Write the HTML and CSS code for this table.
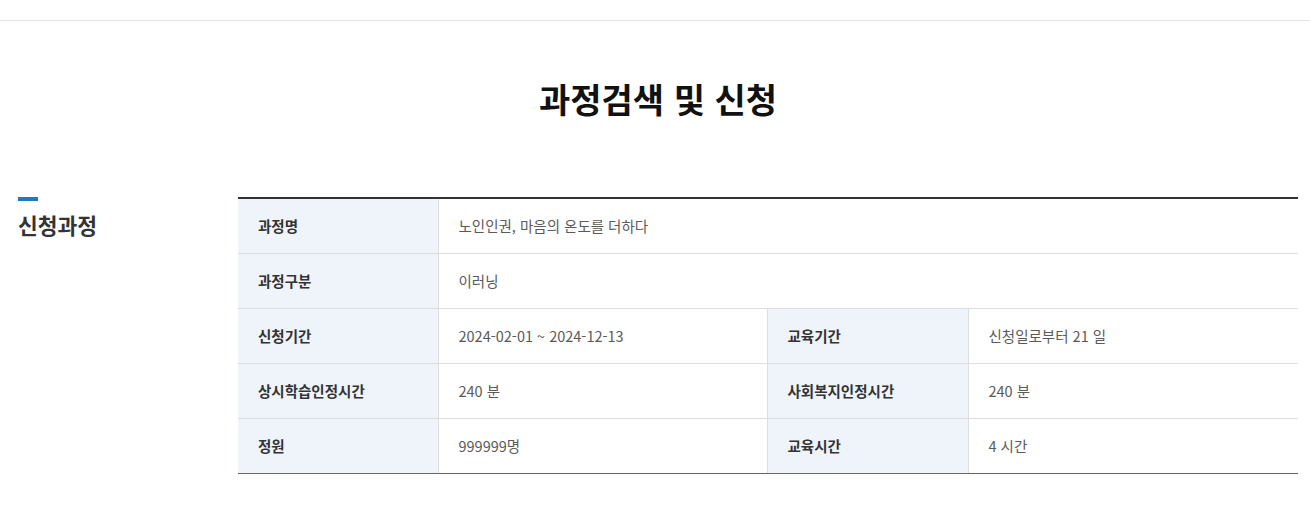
FILE: index.html
```html
<!DOCTYPE html>
<html lang="ko">
<head>
<meta charset="utf-8">
<title>과정검색 및 신청</title>
<link rel="stylesheet" href="styles.css">
</head>
<body>
<header class="topbar"></header>
<main class="page">
  <h1 class="page-title">과정검색 및 신청</h1>
  <section class="apply">
    <div class="apply-side">
      <span class="side-bar"></span>
      <h2 class="side-title">신청과정</h2>
    </div>
    <table class="info">
      <colgroup>
        <col class="c-th"><col class="c-td"><col class="c-th2"><col>
      </colgroup>
      <tbody>
        <tr>
          <th>과정명</th>
          <td colspan="3">노인인권, 마음의 온도를 더하다</td>
        </tr>
        <tr>
          <th>과정구분</th>
          <td colspan="3">이러닝</td>
        </tr>
        <tr>
          <th>신청기간</th>
          <td>2024-02-01 ~ 2024-12-13</td>
          <th>교육기간</th>
          <td>신청일로부터 21 일</td>
        </tr>
        <tr>
          <th>상시학습인정시간</th>
          <td>240 분</td>
          <th>사회복지인정시간</th>
          <td>240 분</td>
        </tr>
        <tr>
          <th>정원</th>
          <td>999999명</td>
          <th>교육시간</th>
          <td>4 시간</td>
        </tr>
      </tbody>
    </table>
  </section>
</main>
</body>
</html>
```

FILE: styles.css
```css
html, body {
  margin: 0;
  padding: 0;
  background: #fff;
}
body {
  font-family: "Noto Sans CJK KR", "Noto Sans", sans-serif;
  color: #333;
}
.topbar {
  height: 20px;
  border-bottom: 1px solid #e5e5e5;
}
.page {
  padding: 0 12px 0 18px;
}
.page-title {
  margin: 0;
  padding-top: 55px;
  height: 120px;
  box-sizing: border-box;
  text-align: center;
  font-size: 34px;
  line-height: 46px;
  font-weight: 700;
  color: #111;
  letter-spacing: 0;
}
.apply {
  display: flex;
  margin-top: 56px;
}
.apply-side {
  width: 220px;
  flex: none;
}
.side-bar {
  display: block;
  width: 20px;
  height: 4px;
  background: #1a7ac6;
}
.side-title {
  margin: 10px 0 0;
  font-size: 21.5px;
  line-height: 28px;
  font-weight: 700;
  color: #333;
}
.info {
  flex: 1;
  border-collapse: collapse;
  table-layout: fixed;
  border-top: 2px solid #333;
  border-bottom: 1px solid #666;
  font-size: 14.5px;
}
.c-th { width: 200px; }
.c-td { width: 329px; }
.c-th2 { width: 201px; }
.info th, .info td {
  height: 55px;
  padding: 0 20px;
  box-sizing: border-box;
  text-align: left;
  vertical-align: middle;
  border-bottom: 1px solid #ddd;
  line-height: 20px;
}
.info tr:last-child th, .info tr:last-child td {
  border-bottom: 1px solid #666;
}
.info th {
  background: #eff4fb;
  font-weight: 700;
  color: #333;
  border-right: 1px solid #ddd;
}
.info td {
  color: #5a5a5a;
  font-weight: 400;
}
.info td + th {
  border-left: 1px solid #ddd;
}
```
